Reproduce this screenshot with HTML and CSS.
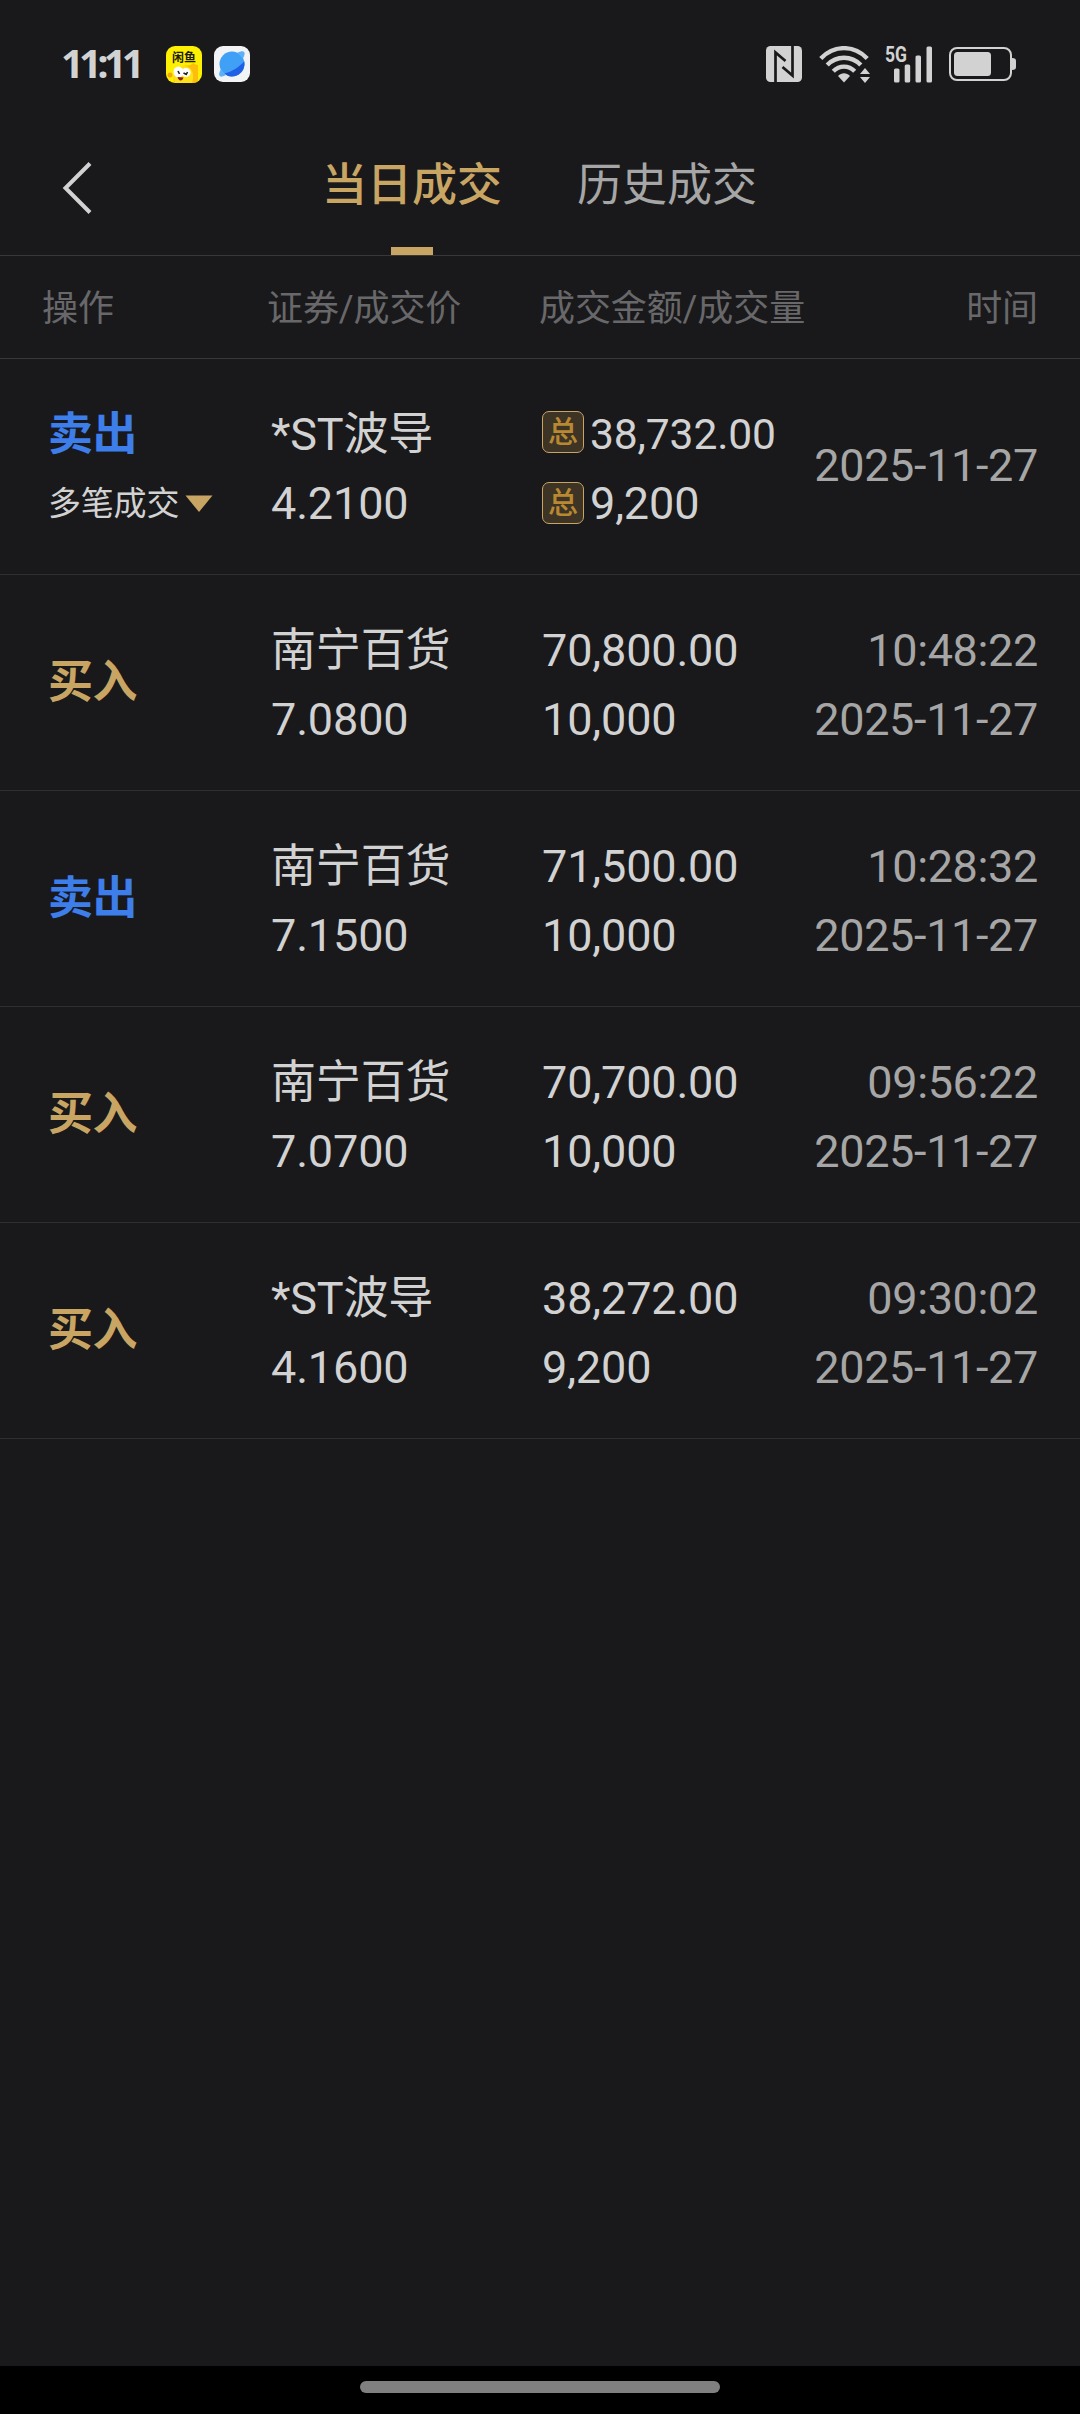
FILE: index.html
```html
<!DOCTYPE html>
<html lang="zh-CN">
<head>
  <meta charset="UTF-8" />
  <meta name="viewport" content="width=device-width, initial-scale=1.0" />
  <title>当日成交</title>
  <link rel="stylesheet" href="styles.css">
</head>
<body>
  <div class="status-bar">
    <span class="clock">11:11</span>
    <svg class="app-icon" width="36" height="37" viewBox="0 0 36 37">
      <clipPath id="round"><rect width="36" height="37" rx="9"/></clipPath>
      <g clip-path="url(#round)">
        <rect width="36" height="37" fill="#fdf002"/>
        <path d="M8 37c-1-9 1-15 9-17 5-1 8 0 10-3 2 1 3 2 5 2v18z" fill="#fdbf0c"/>
        <path d="M9 37c-3-10 2-17 9-17 8 0 11 8 8 17z" fill="#ffe11a"/>
        <circle cx="4" cy="29" r="2.5" fill="#f7a511"/>
        <ellipse cx="12.5" cy="26" rx="5" ry="5.5" fill="#fff"/>
        <ellipse cx="20" cy="26.5" rx="4.6" ry="4.5" fill="#fff"/>
        <path d="M12 25l1.500 3M17.500 27l3 1.500M20 29l1.500-3" stroke="#222" stroke-width="1.600" fill="none"/>
        <path d="M11.500 31l6 .5c-1 4-5 4-6-.5z" fill="#8c1d10"/>
      </g>
      <text class="app-label" x="18" y="15.500" text-anchor="middle">闲鱼</text>
    </svg>
    <svg class="app-icon" width="36" height="36" viewBox="0 0 36 36">
      <rect width="36" height="36" rx="9" fill="#f2f3f5"/>
      <circle cx="18" cy="18" r="12.500" fill="#3fa0f5"/>
      <path d="M30.300 15.500A12.500 12.500 0 0 1 10 27.600C18 26 26 20 30.300 15.500z" fill="#1f5fe6"/>
      <path d="M23.500 6.700C28 4.300 31 4.700 30.600 8c-.2 1.500-.7 3-1.700 4.500zM6.700 23.500C4.300 28 4.700 31 8 30.600c1.300-.2 2.700-.8 4-1.600z" fill="#5bb0f8"/>
    </svg>
    <div class="status-right">
      <svg width="36" height="36" viewBox="0 0 36 36">
        <rect width="36" height="36" rx="4.500" fill="#d2d2d2"/>
        <path d="M9.500 36V6.500L19.500 15M26.500 0v29.500L16.500 21" fill="none" stroke="#19191b" stroke-width="2.700"/>
      </svg>
      <svg class="wifi" width="52" height="37" viewBox="0 0 52 37">
        <g fill="none" stroke="#d2d2d2" stroke-width="4.400">
          <path d="M1.800 12.500C15-1.300 35-1.300 48.200 12.500"/>
          <path d="M8.200 19C17.500 9.300 32.500 9.300 41.800 19"/>
          <path d="M14.300 25.300C20.500 19 29.500 19 35.700 25.300"/>
        </g>
        <path d="M19 30c3.500-3.700 8.500-3.700 12 0l-6 6.500z" fill="#d2d2d2"/>
        <path d="M41 28l5-6 5 6zM41 31h10l-5 6z" fill="#d2d2d2"/>
      </svg>
      <svg class="signal" width="50" height="38" viewBox="0 0 50 38">
        <text class="net-label" x="1" y="17" textLength="22" lengthAdjust="spacingAndGlyphs">5G</text>
        <g fill="#d2d2d2">
          <rect x="10" y="23.500" width="5.500" height="14" rx="1.500"/>
          <rect x="20.700" y="19.500" width="5.500" height="18" rx="1.500"/>
          <rect x="31.500" y="10.500" width="5.500" height="27" rx="1.500"/>
          <rect x="42.500" y="1.500" width="5.500" height="36" rx="1.500"/>
        </g>
      </svg>
      <svg class="battery" width="68" height="34" viewBox="0 0 68 34">
        <rect x="1" y="1" width="61" height="32" rx="7" fill="none" stroke="#d2d2d2" stroke-width="2"/>
        <rect x="5" y="5" width="37" height="24" rx="3.500" fill="#d2d2d2"/>
        <path d="M63 11c3 0 4 1 4 3v6c0 2-1 3-4 3z" fill="#d2d2d2"/>
      </svg>
    </div>
  </div>

  <div class="nav">
    <svg class="back" width="32" height="54" viewBox="0 0 32 54">
      <path d="M29 2.500L4.500 27 29 51.500" fill="none" stroke="#d2d2d2" stroke-width="4"/>
    </svg>
    <div class="tab active">当日成交</div>
    <div class="tab">历史成交</div>
  </div>

  <div class="table-head">
    <span>操作</span>
    <span>证券/成交价</span>
    <span>成交金额/成交量</span>
    <span class="right">时间</span>
  </div>

  <div class="row">
    <div class="action multi">
      <div class="sell">卖出</div>
      <div class="more">多笔成交<svg width="28" height="17" viewBox="0 0 28 17"><path d="M.5.500h27L14 17z" fill="#c9a564"/></svg></div>
    </div>
    <div class="stock">*ST波导<br />4.2100</div>
    <div class="amount">
      <div class="total"><span class="badge">总</span><span class="small">38,732.00</span></div>
      <div class="total"><span class="badge">总</span>9,200</div>
    </div>
    <div class="time single">2025-11-27</div>
  </div>

  <div class="row">
    <div class="action buy">买入</div>
    <div class="stock">南宁百货<br />7.0800</div>
    <div class="amount">70,800.00<br />10,000</div>
    <div class="time">10:48:22<br />2025-11-27</div>
  </div>

  <div class="row">
    <div class="action sell">卖出</div>
    <div class="stock">南宁百货<br />7.1500</div>
    <div class="amount">71,500.00<br />10,000</div>
    <div class="time">10:28:32<br />2025-11-27</div>
  </div>

  <div class="row">
    <div class="action buy">买入</div>
    <div class="stock">南宁百货<br />7.0700</div>
    <div class="amount">70,700.00<br />10,000</div>
    <div class="time">09:56:22<br />2025-11-27</div>
  </div>

  <div class="row">
    <div class="action buy">买入</div>
    <div class="stock">*ST波导<br />4.1600</div>
    <div class="amount">38,272.00<br />9,200</div>
    <div class="time">09:30:02<br />2025-11-27</div>
  </div>

  <div class="home-bar"><div class="home-pill"></div></div>
</body>
</html>
```
FILE: styles.css
```css
* {
  box-sizing: border-box;
}
body {
  margin: 0;
  min-height: 2414px;
  display: flex;
  flex-direction: column;
  background-color: #19191b;
  color: #d2d2d2;
  font-family: Roboto, "Noto Sans CJK SC", sans-serif;
  font-size: 45px;
}
svg {
  display: block;
  flex: none;
}

/* status bar */
.status-bar {
  height: 128px;
  padding: 0 63px 0 61px;
  display: flex;
  align-items: center;
}
.clock {
  width: 105px;
  margin-top: -3px;
  font-family: "Open Sans", sans-serif;
  font-size: 40px;
  font-weight: 700;
  letter-spacing: -4.800px;
}
.app-icon {
  margin-right: 12px;
}
.app-label {
  font-family: "Noto Sans CJK SC", sans-serif;
  font-size: 12px;
  font-weight: 700;
  fill: #1c1c10;
}
.status-right {
  margin-left: auto;
  display: flex;
  align-items: center;
}
.wifi {
  margin-left: 17px;
}
.signal {
  margin-left: 13px;
  overflow: visible;
}
.net-label {
  font-family: Roboto, sans-serif;
  font-size: 22px;
  font-weight: 700;
  fill: #d2d2d2;
}
.battery {
  margin-left: 15px;
}

/* tabs */
.nav {
  height: 128px;
  padding-left: 61px;
  display: flex;
  border-bottom: 1px solid #38383a;
}
.back {
  margin: 33px 229px 0 0;
}
.tab {
  width: 180px;
  height: 127px;
  margin-right: 75px;
  display: flex;
  flex-direction: column;
  align-items: center;
  justify-content: space-between;
  line-height: 116px;
  color: #a6a6a6;
  white-space: nowrap;
}
.active {
  color: #c9a564;
  font-weight: 500;
}
.active::after {
  content: "";
  width: 42px;
  height: 8px;
  margin-top: -8px;
  background: #c9a564;
}

.table-head,
.row {
  display: grid;
  grid-template-columns: 225px 272px 1fr auto;
  padding: 0 42px;
  border-bottom: 1px solid #2f2f31;
}
.table-head {
  height: 103px;
  line-height: 107px;
  font-size: 36px;
  letter-spacing: -0.100px;
  color: #68686a;
  border-color: #38383a;
  white-space: nowrap;
}
.right {
  text-align: right;
}

/* trades */
.row {
  height: 216px;
  padding: 5px 42px 0;
  align-items: center;
  line-height: 69px;
  letter-spacing: -0.150px;
}
.action {
  margin-top: -6px;
  padding-left: 6px;
  font-weight: 700;
  letter-spacing: -0.500px;
}
.multi {
  margin-top: 0;
}
.buy {
  color: #c9a564;
}
.sell {
  color: #3d7eea;
}
.more {
  display: flex;
  align-items: center;
  font-size: 33px;
  font-weight: 400;
  letter-spacing: -0.200px;
}
.more svg {
  margin-left: 6px;
}
.stock {
  padding-left: 4px;
}
.amount {
  padding-left: 3px;
  white-space: nowrap;
}
.time {
  text-align: right;
  color: #a6a6a6;
  letter-spacing: -0.350px;
  white-space: nowrap;
}
.single {
  margin-top: -8px;
}
.total {
  height: 69px;
  display: flex;
  align-items: center;
}
.badge {
  width: 42px;
  height: 42px;
  margin: -2px 6px 0 0;
  border: 1px solid #c9a564;
  border-radius: 7px;
  background: #3d3426;
  color: #b98932;
  font-size: 30px;
  font-weight: 500;
  line-height: 39px;
  text-align: center;
}
.total:first-child .badge {
  margin-top: -6px;
}
.small {
  font-size: 42.600px;
}

.home-bar {
  height: 48px;
  margin-top: auto;
  padding-top: 15px;
  background: #000;
}
.home-pill {
  width: 360px;
  height: 12px;
  margin: 0 auto;
  border-radius: 6px;
  background: #808080;
}
```
